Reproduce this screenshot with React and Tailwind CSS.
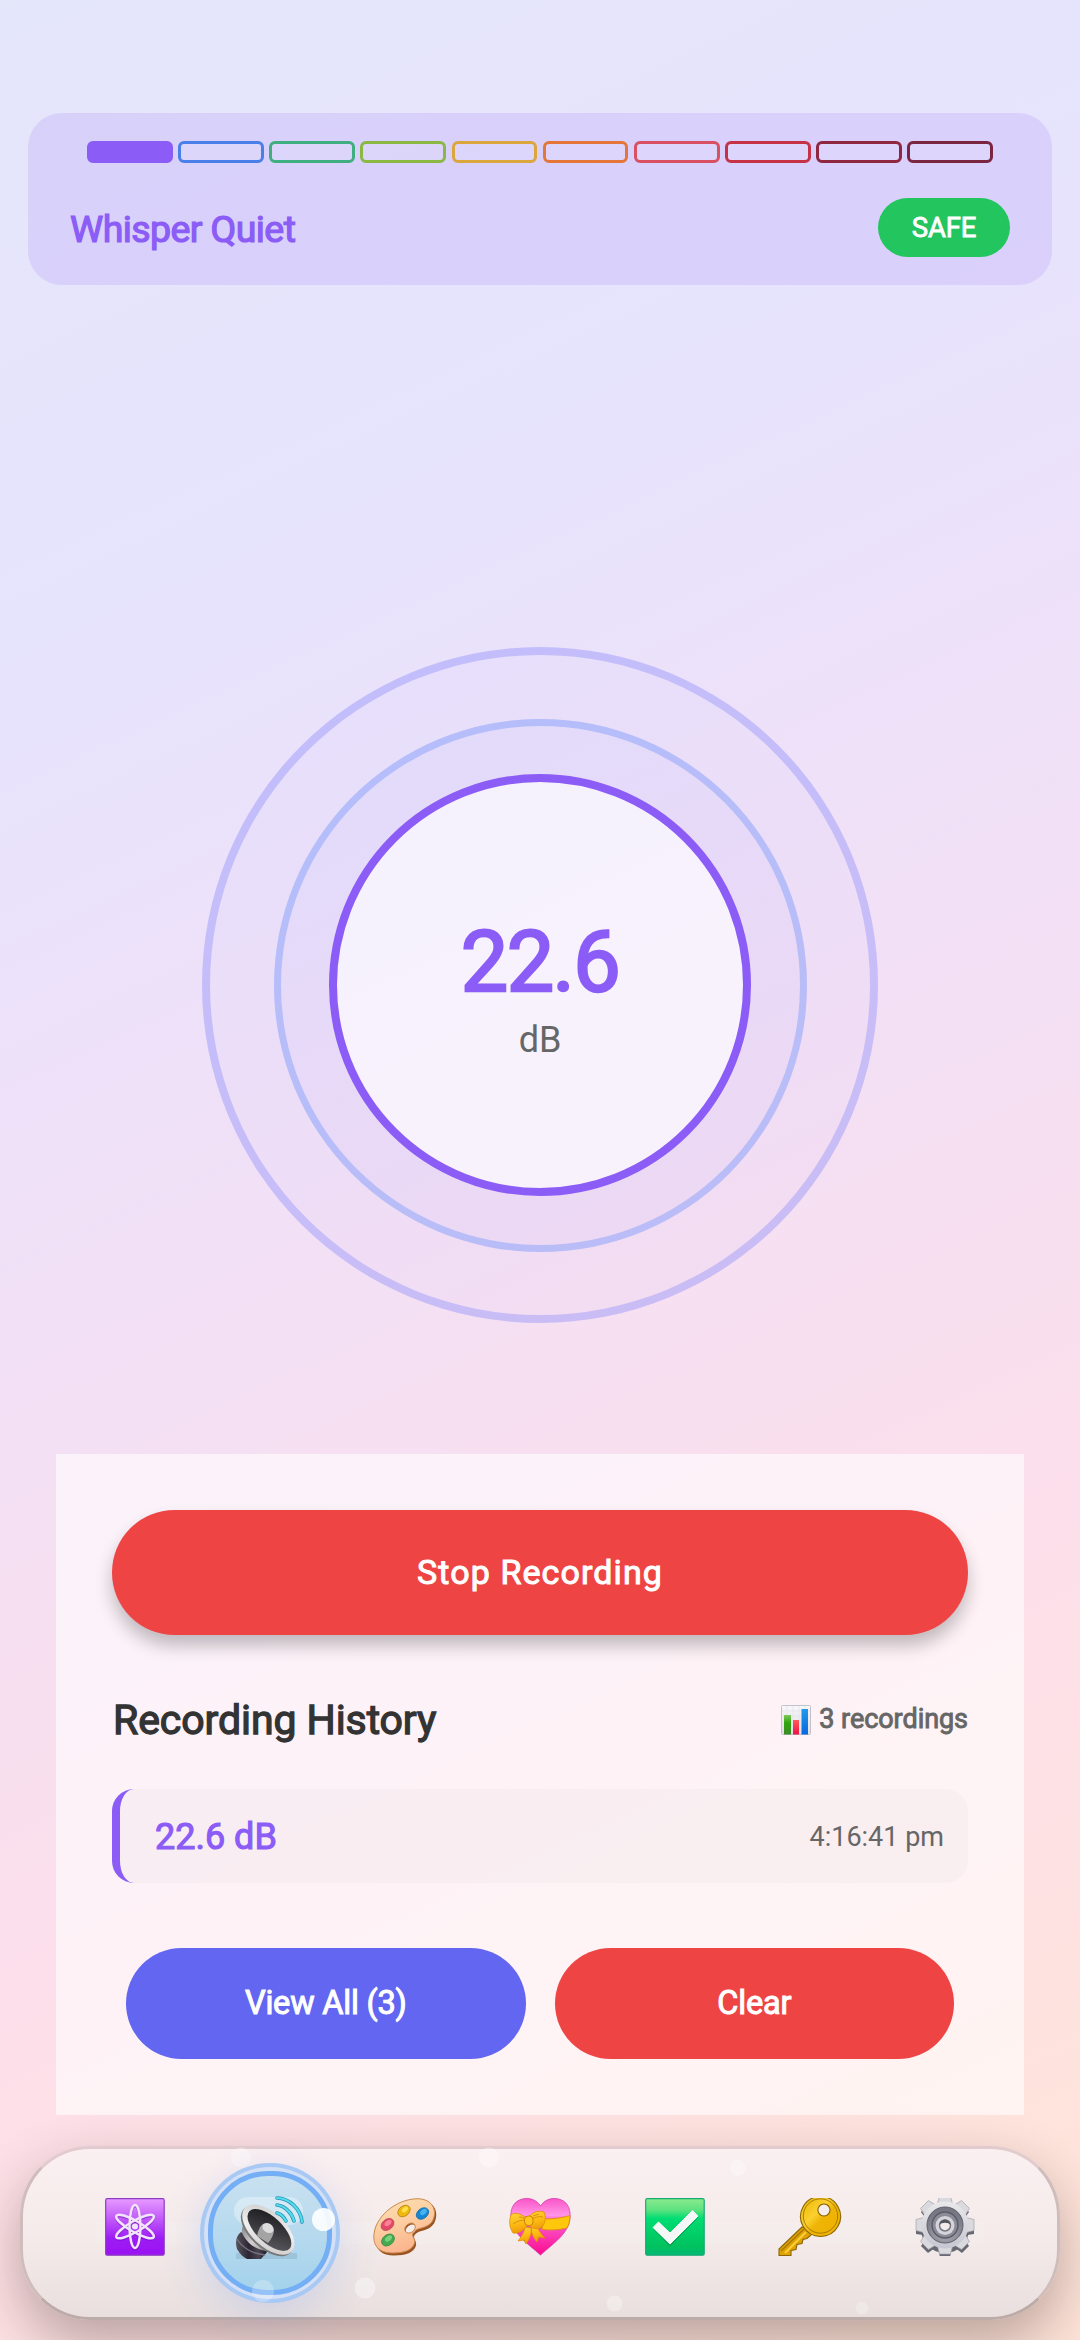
import { useState } from 'react';

const levels = [
  { border: 'border-[#8b5cf6]', fill: 'bg-[#8b5cf6]' },
  { border: 'border-[#4a7ee8]', fill: 'bg-white/10' },
  { border: 'border-[#3fae80]', fill: 'bg-white/10' },
  { border: 'border-[#8bb842]', fill: 'bg-white/10' },
  { border: 'border-[#dba63c]', fill: 'bg-white/10' },
  { border: 'border-[#e5763a]', fill: 'bg-white/10' },
  { border: 'border-[#d95063]', fill: 'bg-white/10' },
  { border: 'border-[#c63245]', fill: 'bg-white/10' },
  { border: 'border-[#8f2740]', fill: 'bg-white/10' },
  { border: 'border-[#7a2640]', fill: 'bg-white/10' },
];

function ChartIcon() {
  return (
    <svg width="30" height="30" viewBox="0 0 30 30">
      <defs>
        <linearGradient id="cg" x1="0" y1="0" x2="0" y2="1">
          <stop offset="0" stopColor="#7fc95a" />
          <stop offset="0.4" stopColor="#2fa60d" />
          <stop offset="1" stopColor="#3b8a26" />
        </linearGradient>
        <linearGradient id="cr" x1="0" y1="0" x2="0" y2="1">
          <stop offset="0" stopColor="#ff5a5a" />
          <stop offset="1" stopColor="#ee1044" />
        </linearGradient>
        <linearGradient id="cb" x1="0" y1="0" x2="0" y2="1">
          <stop offset="0" stopColor="#1f9bea" />
          <stop offset="1" stopColor="#0a66df" />
        </linearGradient>
        <linearGradient id="cw" x1="0" y1="0" x2="0" y2="1">
          <stop offset="0" stopColor="#f8f8f8" />
          <stop offset="1" stopColor="#dedee8" />
        </linearGradient>
      </defs>
      <rect x="0.5" y="0.5" width="29" height="29" rx="1" fill="url(#cw)" stroke="#c3c1c9" />
      <path d="M1 6h28M1 11h28M1 16h28M1 21h28M6 1v28M12 1v28M18 1v28M24 1v28" stroke="#e3e3e8" strokeWidth="0.6" />
      <rect x="3" y="10" width="7" height="19.5" fill="url(#cg)" />
      <rect x="12" y="15" width="6" height="14.5" fill="url(#cr)" />
      <rect x="20.5" y="4" width="6.5" height="25.5" fill="url(#cb)" />
    </svg>
  );
}

function AtomIcon() {
  return (
    <svg width="60" height="58" viewBox="0 0 60 58">
      <defs>
        <linearGradient id="atomBg" x1="0" y1="0" x2="0" y2="1">
          <stop offset="0" stopColor="#e79aff" />
          <stop offset="0.35" stopColor="#c25bfa" />
          <stop offset="0.7" stopColor="#9d1cf5" />
          <stop offset="1" stopColor="#9a12f2" />
        </linearGradient>
      </defs>
      <rect x="0.7" y="0.7" width="58.5" height="56.5" rx="1.5" fill="url(#atomBg)" stroke="#8d3bc4" strokeWidth="1.2" />
      <g transform="translate(0 1.2)" fill="none" stroke="#6510b0" strokeOpacity="0.5" strokeWidth="2.6">
        <ellipse cx="30" cy="28.5" rx="5.5" ry="21.5" />
        <ellipse cx="30" cy="28.5" rx="5.5" ry="21.5" transform="rotate(60 30 28.5)" />
        <ellipse cx="30" cy="28.5" rx="5.5" ry="21.5" transform="rotate(120 30 28.5)" />
      </g>
      <g fill="none" stroke="#f1e4fb" strokeWidth="2.5">
        <ellipse cx="30" cy="28.5" rx="5.5" ry="21.5" />
        <ellipse cx="30" cy="28.5" rx="5.5" ry="21.5" transform="rotate(60 30 28.5)" />
        <ellipse cx="30" cy="28.5" rx="5.5" ry="21.5" transform="rotate(120 30 28.5)" />
      </g>
      <circle cx="30" cy="28.5" r="3" fill="#f1e4fb" />
    </svg>
  );
}

function SpeakerIcon() {
  return (
    <svg width="70" height="63" viewBox="0 0 70 63">
      <defs>
        <linearGradient id="spkCone" x1="0" y1="0" x2="1" y2="1">
          <stop offset="0" stopColor="#17171a" />
          <stop offset="0.5" stopColor="#3a3a3e" />
          <stop offset="1" stopColor="#5e5f66" />
        </linearGradient>
        <linearGradient id="spkNeck" x1="0" y1="0" x2="1" y2="0.6">
          <stop offset="0" stopColor="#7d7b7c" />
          <stop offset="0.5" stopColor="#d2d0d0" />
          <stop offset="1" stopColor="#8f8d8e" />
        </linearGradient>
        <linearGradient id="spkBase" x1="0" y1="0" x2="1" y2="0">
          <stop offset="0" stopColor="#56545c" />
          <stop offset="0.4" stopColor="#2c2533" />
          <stop offset="0.7" stopColor="#4b4453" />
          <stop offset="1" stopColor="#1c1522" />
        </linearGradient>
        <linearGradient id="spkRim" x1="0" y1="0" x2="1" y2="1">
          <stop offset="0" stopColor="#c9c8c8" />
          <stop offset="0.5" stopColor="#f1f0f0" />
          <stop offset="1" stopColor="#c4c2c1" />
        </linearGradient>
      </defs>
      <rect x="1" y="57" width="61" height="6" fill="#4d6f84" opacity="0.18" />
      <path d="M6 36C1 40 0 46 2 53c3 5 6 8 10 10h14l7-8z" fill="url(#spkBase)" />
      <path d="M2 43c4 7 14 15 28 16" fill="none" stroke="#77747e" strokeWidth="1.4" />
      <path d="M10 26c-3 4-4 8-2 13 5 9 13 15 25 16l12-3z" fill="url(#spkNeck)" />
      <g transform="rotate(43 33 34)">
        <ellipse cx="33" cy="35.5" rx="32" ry="17" fill="#77777a" />
        <ellipse cx="33" cy="33.5" rx="32" ry="17" fill="url(#spkRim)" />
        <ellipse cx="34" cy="33" rx="27.5" ry="12.8" fill="url(#spkCone)" />
      </g>
      <path d="M22 40c1-5 3-10 6-12 4-1 10 2 11 6 0 4-3 10-6 13z" fill="#a5a4a5" />
      <ellipse cx="33" cy="32" rx="6" ry="4.5" transform="rotate(35 33 32)" fill="#dddcdc" />
      <g fill="none" stroke="#2790b4" strokeWidth="3.6" strokeLinecap="round">
        <path d="M42 17c4 1 7 4 9 8" />
        <path d="M42 9c8 1 15 8 17 16" />
        <path d="M42 2c12 0 24 11 25 24" />
      </g>
      <g fill="none" stroke="#55dcec" strokeWidth="2.2" strokeLinecap="round">
        <path d="M42 17c4 1 7 4 9 8" />
        <path d="M42 9c8 1 15 8 17 16" />
        <path d="M42 2c12 0 24 11 25 24" />
      </g>
    </svg>
  );
}

function PaletteIcon() {
  return (
    <svg width="64" height="58" viewBox="0 0 64 58">
      <defs>
        <linearGradient id="palBg" x1="0" y1="0" x2="0.4" y2="1">
          <stop offset="0" stopColor="#fbe0b4" />
          <stop offset="0.5" stopColor="#fdcfa2" />
          <stop offset="1" stopColor="#fbb48e" />
        </linearGradient>
      </defs>
      <path
        fillRule="evenodd"
        d="M44 1C24 2 6 17 2 34c-3 14 4 22 18 22 12 0 20-3 22-10 1-5-4-7-1-11 4-5 14-3 19-11C66 12 60 0 44 1zM33 34c-3-3 0-8 5-9 5 0 5 5 3 7-2 3-6 4-8 2z"
        fill="#9b5320"
        transform="translate(1 1.5)"
      />
      <path
        fillRule="evenodd"
        d="M43 .8C23 1.800 5 17 1.500 33c-3 14 4 22 18 22 12 0 20-3 22-10 1-5-4-7-1-11 4-5 14-3 19-11C65 12 59 0 43 .8zM33 34c-3-3 0-8 5-9 5 0 5 5 3 7-2 3-6 4-8 2z"
        fill="url(#palBg)"
        stroke="#c98a4e"
        strokeWidth="1"
      />
      <ellipse cx="31" cy="13" rx="6.8" ry="5" transform="rotate(-38 31 13)" fill="#f0b810" stroke="#b98211" strokeWidth="0.8" />
      <ellipse cx="32" cy="11.5" rx="3.5" ry="2.2" transform="rotate(-38 32 11.5)" fill="#ffe14c" />
      <ellipse cx="49.5" cy="15.5" rx="6.8" ry="5" transform="rotate(-38 49.5 15.5)" fill="#1487d4" stroke="#1770a9" strokeWidth="0.8" />
      <ellipse cx="50.5" cy="14" rx="3.8" ry="2.4" transform="rotate(-38 50.5 14)" fill="#44b4f0" />
      <ellipse cx="14.5" cy="26.5" rx="7" ry="5.2" transform="rotate(-38 14.5 26.5)" fill="#e44a68" stroke="#b84358" strokeWidth="0.8" />
      <ellipse cx="15" cy="25" rx="4" ry="2.4" transform="rotate(-38 15 25)" fill="#fb8193" />
      <ellipse cx="15" cy="42" rx="7" ry="5.2" transform="rotate(-38 15 42)" fill="#45a950" stroke="#3b8543" strokeWidth="0.8" />
      <ellipse cx="15.5" cy="40.5" rx="4" ry="2.4" transform="rotate(-38 15.5 40.5)" fill="#78d27c" />
    </svg>
  );
}

function HeartIcon() {
  return (
    <svg width="62" height="58" viewBox="0 0 62 58">
      <defs>
        <linearGradient id="heartBg" x1="0" y1="0" x2="0" y2="1">
          <stop offset="0" stopColor="#fb55c8" />
          <stop offset="0.3" stopColor="#ff95e6" />
          <stop offset="0.38" stopColor="#fc5fd3" />
          <stop offset="1" stopColor="#fb0b8e" />
        </linearGradient>
        <linearGradient id="bow" x1="0" y1="0" x2="0.3" y2="1">
          <stop offset="0" stopColor="#ffd83d" />
          <stop offset="0.6" stopColor="#fdba12" />
          <stop offset="1" stopColor="#ee9808" />
        </linearGradient>
      </defs>
      <path d="M31.500 8C36 1 43 0 48 .7 57 2 62 9 61 20c-1 15-16 25-29.500 37C18 45 3 35 2 20 1 9 6 2 15 .7 20 0 27 1 31.500 8z" fill="url(#heartBg)" stroke="#d63cad" strokeWidth="0.8" />
      <path d="M34 21c9 0 19-1 27-3.500 0 5-1 9-3 12.500-8 2-17 2.500-25 1.500z" fill="#ffc70b" stroke="#d88a0a" strokeWidth="0.8" />
      <path d="M16 29c-1 6-4 10-7 14l6-1 2 4c4-5 5-10 6-16zM22 29c0 6 3 12 6 15l2-5 6 1c-4-4-7-8-8-13z" fill="url(#bow)" stroke="#dd8a05" strokeWidth="0.7" />
      <path d="M17 20C11 15 5 14 2 17c-2 5-2 12 2 18 6 1 11-3 15-9 4 5 10 6 14 3 4-5 4-10 2-15-5-2-12 0-15 5z" fill="url(#bow)" stroke="#dd9105" strokeWidth="0.8" />
      <path d="M4 26c4-3 8-4 13-4M23 21c4-2 7-3 11-2M10 19c3 0 5 1 7 3M24 18l6-2" stroke="#d99210" strokeWidth="1" fill="none" />
      <rect x="15.5" y="18" width="8.5" height="9.5" rx="3.5" fill="#ffc61c" stroke="#cf8208" strokeWidth="1" />
    </svg>
  );
}

function CheckIcon() {
  return (
    <svg width="60" height="58" viewBox="0 0 60 58">
      <defs>
        <linearGradient id="checkBg" x1="0" y1="0" x2="0" y2="1">
          <stop offset="0" stopColor="#8bea8f" />
          <stop offset="0.2" stopColor="#5ce27f" />
          <stop offset="0.35" stopColor="#00dd72" />
          <stop offset="0.85" stopColor="#00c25e" />
          <stop offset="1" stopColor="#02b877" />
        </linearGradient>
      </defs>
      <rect x="0.7" y="0.7" width="58.5" height="56.5" rx="1.5" fill="url(#checkBg)" stroke="#17ab72" strokeWidth="1.2" />
      <path d="M8 30.500l6-6 11 11L47.500 12.500l6 6L25 48z" fill="#0b8a4c" opacity="0.45" transform="translate(0 1)" />
      <path d="M8 29.500l5.500-5.500L25 35 47.500 12.500l5.500 5.500L25 46z" fill="#f6f8f7" stroke="#f6f8f7" strokeLinejoin="round" />
    </svg>
  );
}

function KeyIcon() {
  return (
    <svg width="64" height="58" viewBox="0 0 64 58">
      <defs>
        <linearGradient id="keyBg" x1="0" y1="0" x2="1" y2="1">
          <stop offset="0" stopColor="#eab300" />
          <stop offset="0.4" stopColor="#fbd02f" />
          <stop offset="0.55" stopColor="#eeb406" />
          <stop offset="1" stopColor="#f0b000" />
        </linearGradient>
      </defs>
      <path d="M24 29L1 51v6.500h12v-5l5-1 1-5 5-1 1-4 4-1 8-7z" fill="#e0a202" stroke="#8a6503" strokeWidth="1.1" />
      <path d="M26 31L3 53" stroke="#a87a04" strokeWidth="1.6" />
      <path d="M28 34L7 55" stroke="#f9cf3a" strokeWidth="2" />
      <path fillRule="evenodd" d="M42.500-1.500a20 20 0 1 0 .1 0zM46 6a6 6 0 1 1-.1 0z" fill="url(#keyBg)" stroke="#8a6503" strokeWidth="1.1" />
      <circle cx="42.5" cy="18" r="17.2" fill="none" stroke="#a87c06" strokeWidth="1" />
    </svg>
  );
}

function GearIcon() {
  const teeth = [0, 45, 90, 135, 180, 225, 270, 315];
  return (
    <svg width="60" height="58" viewBox="0 0 60 58">
      <defs>
        <linearGradient id="gearBg" x1="0" y1="0" x2="0" y2="1">
          <stop offset="0" stopColor="#e9e9eb" />
          <stop offset="1" stopColor="#c6c6d2" />
        </linearGradient>
        <radialGradient id="gearIn" cx="0.5" cy="0.7" r="0.6">
          <stop offset="0" stopColor="#b1b1bb" />
          <stop offset="1" stopColor="#767783" />
        </radialGradient>
      </defs>
      <g fill="#686873" transform="translate(0 4)">
        <circle cx="30" cy="27" r="24" />
        {teeth.map((a) => (
          <path key={a} d="M23.500 8l1.500-10h10l1.500 10z" transform={`rotate(${a} 30 27)`} />
        ))}
      </g>
      <g fill="#d9d9de">
        {teeth.map((a) => (
          <path key={a} d="M22 8l2.500-10h11l2.500 10z" stroke="#a5a5ad" strokeWidth="0.7" transform={`rotate(${a} 30 27)`} />
        ))}
      </g>
      <circle cx="30" cy="27" r="23.5" fill="url(#gearBg)" />
      <circle cx="30" cy="27" r="18" fill="url(#gearIn)" stroke="#5f606b" strokeWidth="1" />
      <circle cx="30" cy="27" r="13" fill="#8a8b96" stroke="#5b5c67" strokeWidth="1.5" />
      <circle cx="30" cy="27.5" r="9.5" fill="#d4d4da" />
      <circle cx="30" cy="27.5" r="5.5" fill="#f3eceb" stroke="#777782" strokeWidth="1.5" />
      <path d="M24.500 27a5.500 5.500 0 0 1 11 0c-2-3-9-3-11 0z" fill="#55565f" />
    </svg>
  );
}

const tabs = [
  { id: 'science', Icon: AtomIcon },
  { id: 'sound', Icon: SpeakerIcon },
  { id: 'art', Icon: PaletteIcon },
  { id: 'gift', Icon: HeartIcon },
  { id: 'tasks', Icon: CheckIcon },
  { id: 'keys', Icon: KeyIcon },
  { id: 'settings', Icon: GearIcon },
];

function LevelCard() {
  return (
    <section className="mx-7 mt-[113px] h-[172px] rounded-[34px] bg-[#8b5cf6]/14 pt-7">
      <div className="mx-[59px] flex h-[22px] gap-[5.6px]">
        {levels.map((level, i) => (
          <div key={i} className={`flex-1 rounded-[6px] border-3 ${level.border} ${level.fill}`} />
        ))}
      </div>
      <div className="mt-[33px] flex items-center justify-between pr-[42px] pl-[42px]">
        <span className="mt-[3px] text-[37.5px] leading-[60px] tracking-[-0.6px] text-[#8b5cf6] [-webkit-text-stroke:1.2px_#8b5cf6]">
          Whisper Quiet
        </span>
        <span className="flex h-[59px] w-[132px] items-center justify-center rounded-full bg-[#22c55e] pt-px text-[27.5px] tracking-[-0.2px] text-white [-webkit-text-stroke:0.8px_white]">
          SAFE
        </span>
      </div>
    </section>
  );
}

function Meter({ value }) {
  return (
    <div className="mx-auto mt-[362px] flex size-[676px] items-center justify-center rounded-full border-[8.4px] border-[#8b8bfa]/40 bg-[#6366f1]/2">
      <div className="flex size-[533px] shrink-0 items-center justify-center rounded-full border-7 border-[#7c9cfb]/45 bg-[#6366f1]/3">
        <div className="flex size-[422px] shrink-0 flex-col items-center justify-center rounded-full border-[8.4px] border-[#8b5cf6] bg-white/65">
          <span className="mt-[4px] text-[84.4px] leading-[100px] tracking-[-1.5px] text-[#8b5cf6] [-webkit-text-stroke:2.4px_#8b5cf6]">
            {value}
          </span>
          <span className="mt-[6px] text-[36px] leading-[42px] text-[#666]">dB</span>
        </div>
      </div>
    </div>
  );
}

function HistoryPanel({ onStop }) {
  return (
    <section className="mx-14 mt-[131px] h-[661px] bg-white/60 px-14 pt-14">
      <button
        onClick={onStop}
        className="flex h-[125px] w-full items-center justify-center rounded-full bg-[#ef4444] text-[34px] tracking-[1.1px] text-white shadow-[0_11px_17px_rgba(0,0,0,0.24)] [-webkit-text-stroke:1px_white]"
      >
        Stop Recording
      </button>
      <div className="mt-[56px] flex h-[60px] items-center justify-between">
        <h2 className="pl-px text-[41px] tracking-[-0.08px] text-[#333] [-webkit-text-stroke:1.3px_#333]">Recording History</h2>
        <div className="-mt-[3px] flex items-center gap-2 text-[27px] tracking-[-0.05px] text-[#666] [-webkit-text-stroke:0.9px_#666]">
          <ChartIcon />
          3 recordings
        </div>
      </div>
      <div className="mt-[38px] flex h-[94px] items-center justify-between rounded-[22px] border-l-[8.4px] border-[#8b5cf6] bg-black/[0.02] pt-0.5 pr-6 pl-[35px]">
        <span className="text-[36px] text-[#8b5cf6] [-webkit-text-stroke:1.1px_#8b5cf6]">22.6 dB</span>
        <span className="text-[27px] text-[#666]">4:16:41 pm</span>
      </div>
      <div className="mt-[65px] flex gap-[29px] px-[14px]">
        <button className="h-[111px] flex-1 rounded-full bg-[#6366f1] text-[32.5px] tracking-[-0.2px] text-white [-webkit-text-stroke:1px_white]">
          View All (3)
        </button>
        <button className="h-[111px] flex-1 rounded-full bg-[#ef4444] text-[32.5px] tracking-[-0.2px] text-white [-webkit-text-stroke:1px_white]">
          Clear
        </button>
      </div>
    </section>
  );
}

function Bubbles() {
  return (
    <svg className="pointer-events-none absolute -top-[3px] -left-[3px]" width="1040" height="174" viewBox="20 2146 1040 174" fill="white">
      <circle cx="241" cy="2157.5" r="10" opacity="0.35" />
      <circle cx="264" cy="2291" r="11" opacity="0.3" />
      <circle cx="365" cy="2288" r="10.5" opacity="0.4" />
      <circle cx="489" cy="2157.5" r="10" opacity="0.35" />
      <circle cx="614.5" cy="2303.5" r="8" opacity="0.3" />
      <circle cx="738" cy="2168" r="8" opacity="0.3" />
      <circle cx="862" cy="2308" r="6.5" opacity="0.25" />
      <rect x="96" y="2222" width="888" height="22" opacity="0.12" />
    </svg>
  );
}

function TabBar({ active, onChange }) {
  return (
    <nav className="relative mx-5 mt-[31px] flex h-[174px] items-center rounded-[70px] border-3 border-x-[#cfbdbc] border-t-[#e2cbce] border-b-[#bcaca9] bg-linear-to-b from-[#fbf0f1] via-[#f4ebea] to-[#e8dfde] bg-clip-padding px-[44px] shadow-[0_24px_56px_rgba(30,15,15,0.3)]">
      <Bubbles />
      {tabs.map(({ id, Icon }) => (
        <button key={id} onClick={() => onChange(id)} className="flex h-full min-w-0 flex-1 items-center justify-center">
          {id === active ? (
            <span className="relative flex size-[140px] shrink-0 items-center justify-center rounded-full border-4 border-[#74aef5]/45 bg-[#d3e0f5] shadow-[0_10px_40px_rgba(80,140,245,0.2)]">
              <span className="flex size-[124px] shrink-0 items-center justify-center rounded-[60px] border-[5.5px] border-[#74aef5] bg-linear-to-b from-[#c9e1f0] to-[#a4d2ec]">
                <span className="absolute top-[30px] left-[30px] h-[28px] w-[69px] rounded-full bg-white/35" />
                <span className="absolute top-[41px] left-[108px] size-[23px] rounded-full bg-white/90" />
                <span className="relative mt-[-12px]">
                  <Icon />
                </span>
              </span>
              <span className="absolute bottom-[-3px] left-[48px] size-[22px] rounded-full bg-white/25" />
            </span>
          ) : (
            <span className="relative mt-[-13px]">
              <Icon />
            </span>
          )}
        </button>
      ))}
    </nav>
  );
}

export default function App() {
  const [activeTab, setActiveTab] = useState('sound');
  const [recording, setRecording] = useState(true);

  return (
    <div className="flex h-[2340px] w-[1080px] flex-col overflow-hidden bg-[linear-gradient(155.2deg,#e4e6fa_0%,#e7e3fd_25%,#f2e0f6_48%,#fddfea_72%,#ffe4d9_96%)] font-['Roboto',sans-serif]">
      <LevelCard />
      <Meter value="22.6" />
      <HistoryPanel onStop={() => setRecording(!recording)} />
      <TabBar active={activeTab} onChange={setActiveTab} />
    </div>
  );
}
